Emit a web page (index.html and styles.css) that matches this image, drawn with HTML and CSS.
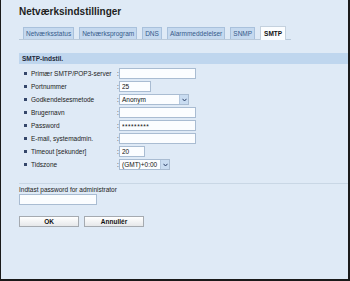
FILE: index.html
```html
<!DOCTYPE html>
<html lang="da">
<head>
    <meta charset="UTF-8">
    <meta name="viewport" content="width=device-width, initial-scale=1.0">
    <title>Netværksindstillinger</title>
    <link rel="stylesheet" href="styles.css">
</head>
<body>
    <div class="page">
        <h1 class="page-title">Netværksindstillinger</h1>

        <div class="tabs">
            <span class="tab">Netværksstatus</span>
            <span class="tab">Netværksprogram</span>
            <span class="tab">DNS</span>
            <span class="tab">Alarmmeddelelser</span>
            <span class="tab">SNMP</span>
            <span class="tab active">SMTP</span>
        </div>

        <div class="section-head">SMTP-indstil.</div>

        <div class="form">
            <div class="row">
                <span class="bullet"></span>
                <span class="label">Primær SMTP/POP3-server</span>
                <span class="colon">:</span>
                <input class="field wide" type="text" value="">
            </div>
            <div class="row">
                <span class="bullet"></span>
                <span class="label">Portnummer</span>
                <span class="colon">:</span>
                <input class="field port" type="text" value="25">
            </div>
            <div class="row">
                <span class="bullet"></span>
                <span class="label">Godkendelsesmetode</span>
                <span class="colon">:</span>
                <div class="select auth">
                    <span class="select-text">Anonym</span>
                    <span class="select-arrow"><svg width="5" height="4" viewBox="0 0 5 4"><path d="M0.5 0.8 L2.5 3 L4.5 0.8" fill="none" stroke="#2b3f66" stroke-width="1"/></svg></span>
                </div>
            </div>
            <div class="row">
                <span class="bullet"></span>
                <span class="label">Brugernavn</span>
                <span class="colon">:</span>
                <input class="field wide" type="text" value="">
            </div>
            <div class="row">
                <span class="bullet"></span>
                <span class="label">Password</span>
                <span class="colon">:</span>
                <input class="field wide secret" type="text" value="*********">
            </div>
            <div class="row">
                <span class="bullet"></span>
                <span class="label">E-mail, systemadmin.</span>
                <span class="colon">:</span>
                <input class="field wide" type="text" value="">
            </div>
            <div class="row">
                <span class="bullet"></span>
                <span class="label">Timeout [sekunder]</span>
                <span class="colon">:</span>
                <input class="field timeout" type="text" value="20">
            </div>
            <div class="row">
                <span class="bullet"></span>
                <span class="label">Tidszone</span>
                <span class="colon">:</span>
                <div class="select zone">
                    <span class="select-text">(GMT)+0:00</span>
                    <span class="select-arrow"><svg width="5" height="4" viewBox="0 0 5 4"><path d="M0.5 0.8 L2.5 3 L4.5 0.8" fill="none" stroke="#2b3f66" stroke-width="1"/></svg></span>
                </div>
            </div>
        </div>

        <div class="admin">
            <div class="admin-label">Indtast password for administrator</div>
            <input class="field admin-field" type="password" value="">
        </div>

        <div class="buttons">
            <button class="btn">OK</button>
            <button class="btn">Annullér</button>
        </div>
    </div>
</body>
</html>
```

FILE: styles.css
```css
html {
    height: 100%;
}

body {
    margin: 0;
    height: 100%;
    box-sizing: border-box;
    font-family: "Liberation Sans", Arial, sans-serif;
    font-size: 6.5px;
    color: #222;
    background: #dfeaf6;
    border-left: 1px solid #1a1a1a;
    border-right: 2px solid #1a1a1a;
    border-bottom: 2px solid #1a1a1a;
    overflow: hidden;
}

.page {
    padding: 6px 0 0 18px;
}

.page-title {
    margin: 0;
    font-size: 10px;
    line-height: 12px;
    font-weight: bold;
    color: #1e1e1e;
}

.tabs {
    display: inline-flex;
    align-items: flex-end;
    gap: 5px;
    margin-top: 8px;
    padding: 0 5px 0 4px;
    height: 13px;
    border-bottom: 1px solid #b9c9da;
}

.tab {
    display: flex;
    align-items: center;
    height: 12px;
    padding: 0 2px;
    background: #c5d9ef;
    border: 1px solid #a9c1dc;
    border-bottom: none;
    color: #35598a;
    font-size: 6.5px;
    box-sizing: border-box;
}

.tab.active {
    height: 14px;
    margin-bottom: -1px;
    padding: 0 3px;
    background: #fbfdff;
    border-color: #c4d1de;
    color: #111;
    font-weight: bold;
}

.section-head {
    margin-top: 13px;
    height: 11px;
    line-height: 11px;
    padding-left: 3px;
    background: #bfd6ee;
    font-weight: bold;
    color: #1e2a3a;
}

.form {
    padding: 3px 0 12px;
    border-bottom: 1px solid #c9d7e5;
}

.row {
    display: flex;
    align-items: center;
    height: 13px;
    padding-left: 5px;
}

.bullet {
    width: 3px;
    height: 3px;
    background: #34466a;
    margin-right: 4px;
    flex: none;
}

.label {
    width: 86px;
    flex: none;
    color: #222;
}

.colon {
    width: 2px;
    flex: none;
}

.field {
    height: 11px;
    box-sizing: border-box;
    margin: 0;
    padding: 0 2px;
    border: 1px solid #a9bcd2;
    background: #fbfdff;
    font-family: "Liberation Sans", Arial, sans-serif;
    font-size: 6.5px;
    color: #111;
    outline: none;
}

.secret {
    letter-spacing: 0.5px;
    padding-top: 2px;
}

.wide {
    width: 77px;
}

.port {
    width: 32px;
}

.timeout {
    width: 26px;
}

.select {
    display: flex;
    align-items: stretch;
    height: 11px;
    box-sizing: border-box;
    border: 1px solid #a9bcd2;
    background: #fbfdff;
}

.select.auth {
    width: 70px;
}

.select.zone {
    width: 51px;
}

.select-text {
    flex: 1;
    padding-left: 2px;
    line-height: 9px;
    color: #111;
}

.select-arrow {
    width: 8px;
    display: flex;
    align-items: center;
    justify-content: center;
    background: #c9dcf1;
    border-left: 1px solid #b4c8df;
}

.admin {
    padding-top: 2px;
}

.admin-label {
    line-height: 8px;
    color: #222;
}

.admin-field {
    display: block;
    width: 78px;
}

.buttons {
    display: flex;
    gap: 5px;
    margin-top: 11px;
}

.btn {
    width: 60px;
    height: 11px;
    margin: 0;
    padding: 0;
    box-sizing: border-box;
    border: 1px solid #a5aab0;
    background: linear-gradient(#ffffff, #e6e8ea);
    font-family: "Liberation Sans", Arial, sans-serif;
    font-size: 6.5px;
    font-weight: bold;
    color: #111;
}
```
